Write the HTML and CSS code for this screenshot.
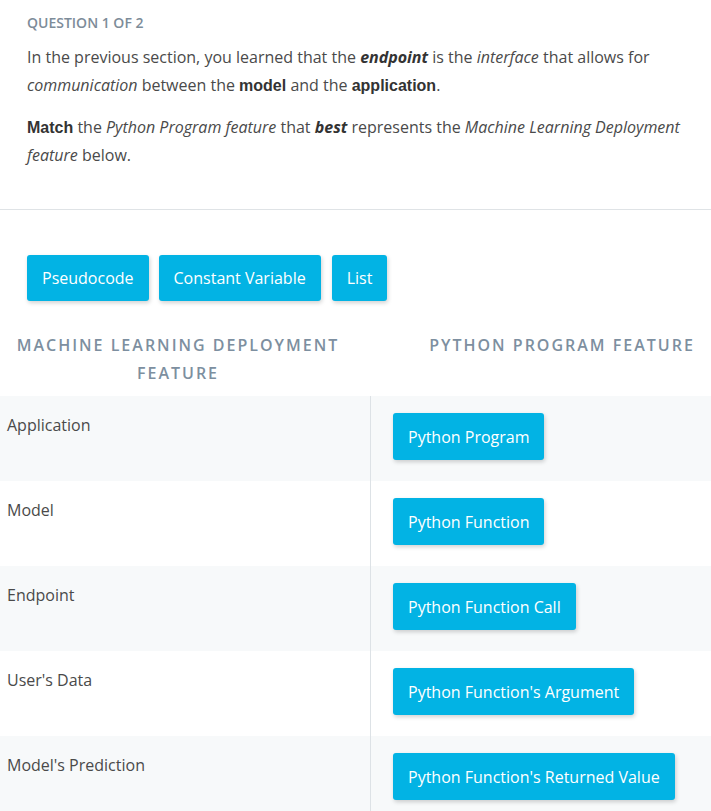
FILE: index.html
```html
<!DOCTYPE html>
<html>
<head>
<meta charset="utf-8">
<link rel="stylesheet" href="styles.css">
</head>
<body>
<div class="question">
  <div class="q-head">QUESTION 1 OF 2</div>
  <p>In the previous section, you learned that the <em class="bi">endpoint</em> is the <em>interface</em> that allows for <em>communication</em> between the <strong class="sb">model</strong> and the <strong class="sb">application</strong>.</p>
  <p><strong class="sb">Match</strong> the <em>Python Program feature</em> that <em class="bi">best</em> represents the <em>Machine Learning Deployment feature</em> below.</p>
</div>
<div class="divider"></div>
<div class="choices">
  <button class="chip">Pseudocode</button>
  <button class="chip">Constant Variable</button>
  <button class="chip">List</button>
</div>
<div class="headers">
  <div class="h-left">MACHINE LEARNING DEPLOYMENT FEATURE</div>
  <div class="h-right">PYTHON PROGRAM FEATURE</div>
</div>
<div class="rows">
  <div class="row alt"><div class="label">Application</div><div class="slot"><button class="chip">Python Program</button></div></div>
  <div class="row"><div class="label">Model</div><div class="slot"><button class="chip">Python Function</button></div></div>
  <div class="row alt"><div class="label">Endpoint</div><div class="slot"><button class="chip">Python Function Call</button></div></div>
  <div class="row"><div class="label">User's Data</div><div class="slot"><button class="chip">Python Function's Argument</button></div></div>
  <div class="row alt"><div class="label">Model's Prediction</div><div class="slot"><button class="chip">Python Function's Returned Value</button></div></div>
</div>
</body>
</html>
```

FILE: styles.css
```css
* { box-sizing: border-box; }
html, body { margin: 0; padding: 0; background: #fff; }
body {
  font-family: "Open Sans", sans-serif;
  color: #4a4a4a;
  font-size: 16px;
}
.question {
  padding: 13px 27px 0 27px;
}
.q-head {
  font-size: 14px;
  line-height: 20px;
  font-weight: 600;
  color: #7d8c99;
}
.question p {
  margin: 10px 0 14px 0;
  line-height: 28px;
  font-size: 16px;
}
.question p + p { margin-top: 0; }
.question p:last-child { margin-bottom: 40px; }
.sb {
  font-family: "Liberation Sans", Arial, sans-serif;
  font-weight: 700;
  color: #333;
  line-height: 1;
}
.bi { font-weight: 700; color: #333; }
.divider {
  height: 1px;
  background: #dfe3e6;
}
.choices {
  display: flex;
  gap: 10px;
  padding: 45px 27px 0 27px;
}
.chip {
  font-family: "Open Sans", sans-serif;
  font-size: 16px;
  color: #fff;
  background: #02b3e4;
  border: none;
  border-radius: 3px;
  height: 46px;
  padding: 0 15px;
  box-shadow: 1px 2px 4px rgba(0, 0, 0, 0.18);
  white-space: nowrap;
}
.choices .chip:last-child { margin-left: 1px; }
.headers {
  display: grid;
  grid-template-columns: 356px 1fr;
  padding-top: 30px;
  font-size: 16px;
  font-weight: 600;
  letter-spacing: 2px;
  line-height: 28px;
  color: #7d8fa0;
  text-align: center;
}
.h-left { padding: 0 10px; }
.h-right { padding-left: 57px; }
.rows {
  margin-top: 9px;
}
.row {
  display: grid;
  grid-template-columns: 371px 1fr;
  height: 85px;
}
.row.alt { background: #f7f9fa; }
.label {
  border-right: 1px solid #dde2e6;
  padding: 15px 7px 0 7px;
  line-height: 28px;
  color: #4a4a4a;
}
.slot {
  padding: 17px 22px 0 22px;
}
.slot .chip { height: 47px; }
```
